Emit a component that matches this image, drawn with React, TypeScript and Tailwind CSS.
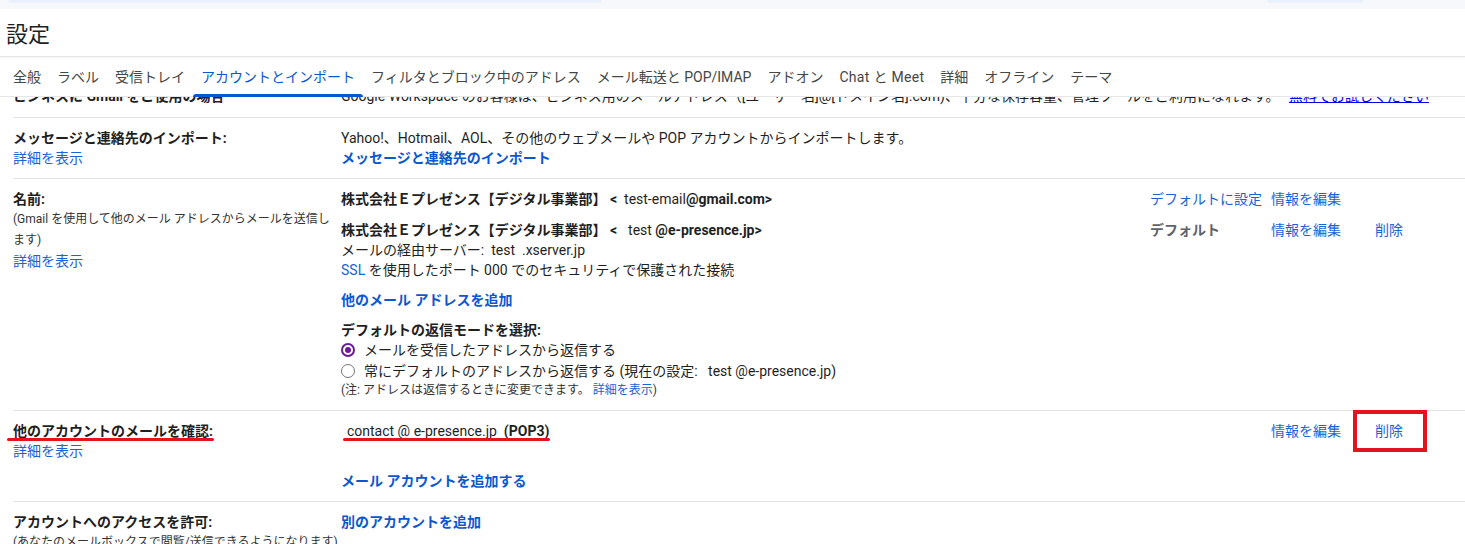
import React from 'react';

const tabs = [
  '全般',
  'ラベル',
  '受信トレイ',
  'アカウントとインポート',
  'フィルタとブロック中のアドレス',
  'メール転送と POP/IMAP',
  'アドオン',
  'Chat と Meet',
  '詳細',
  'オフライン',
  'テーマ',
];

const ACTIVE_TAB = 'アカウントとインポート';

function Link({ children, bold }: { children: React.ReactNode; bold?: boolean }) {
  return (
    <span className={bold ? 'font-bold text-[#0b57d0]' : 'text-[#1a62d6]'}>{children}</span>
  );
}

function Radio({ checked }: { checked?: boolean }) {
  return (
    <span
      className={
        checked
          ? 'mr-[9px] flex h-[14px] w-[14px] shrink-0 items-center justify-center rounded-full border-2 border-[#6b1b9a]'
          : 'mr-[9px] flex h-[14px] w-[14px] shrink-0 items-center justify-center rounded-full border border-[#767676]'
      }
    >
      {checked && <span className="h-[6px] w-[6px] rounded-full bg-[#6b1b9a]" />}
    </span>
  );
}

function Row({
  left,
  right,
  className,
}: {
  left: React.ReactNode;
  right: React.ReactNode;
  className?: string;
}) {
  return (
    <div className={`ml-[13px] flex border-b border-[#e3e3e3] ${className ?? 'pt-[10px] pb-[10px]'}`}>
      <div className="w-[328px] shrink-0">{left}</div>
      <div className="min-w-0 flex-1">{right}</div>
    </div>
  );
}

function Actions({
  first,
  second,
  third,
}: {
  first?: React.ReactNode;
  second?: React.ReactNode;
  third?: React.ReactNode;
}) {
  return (
    <div className="flex w-[315px] shrink-0">
      <div className="w-[121px]">{first}</div>
      <div className="w-[104px]">{second}</div>
      <div className="flex-1">{third}</div>
    </div>
  );
}

export default function App() {
  return (
    <div className="h-[544px] w-[1465px] overflow-hidden bg-white font-['Roboto','Noto_Sans_CJK_JP',sans-serif] text-[14px] leading-[20px] text-[#1f1f1f]">
      {/* top strip */}
      <div className="flex h-[9px] items-start bg-[#f6f8fc]">
        <div className="ml-[8px] h-[3px] w-[594px] rounded-b-[6px] bg-[#eaf1fb]" />
        <div className="ml-auto mr-[102px] h-[3px] w-[96px] rounded-b-[6px] bg-[#eaf1fb]" />
      </div>

      {/* header */}
      <div className="relative z-10 bg-white">
        <div className="flex h-[48px] items-center border-b border-[#e6e6e6] pt-[5px] pl-[6px] shadow-[0_1px_1px_rgba(0,0,0,0.04)]">
          <h1 className="text-[22px] leading-[28px] font-normal text-[#1f1f1f]">設定</h1>
        </div>
        <div className="flex h-[40px] items-stretch border-b border-[#e6e6e6] pl-[5px]">
          {tabs.map((tab) => (
            <div
              key={tab}
              className={
                tab === ACTIVE_TAB
                  ? 'relative flex items-center px-[8px] text-[#0b57d0]'
                  : tab === 'Chat と Meet'
                    ? 'relative flex items-center px-[8px] tracking-[0.3px] text-[#444746]'
                    : 'relative flex items-center px-[8px] text-[#444746]'
              }
            >
              {tab}
              {tab === ACTIVE_TAB && (
                <span className="absolute right-0 -bottom-px left-0 h-[3px] rounded-t-[3px] bg-[#0b57d0]" />
              )}
            </div>
          ))}
        </div>
      </div>

      {/* content */}
      <div className="relative">
        <Row
          className="-mt-[11px] pb-[11px]"
          left={<div className="font-bold">ビジネスに Gmail をご使用の場合</div>}
          right={
            <div className="whitespace-nowrap">
              Google Workspace のお客様は、ビジネス用のメールアドレス（[ユーザー名]@[ドメイン名].com)、十分な保存容量、管理ツールをご利用になれます。{' '}
              <span className="ml-[6px] text-[#0000ee] underline">無料でお試しください</span>
            </div>
          }
        />

        <Row
          left={
            <>
              <div className="font-bold">メッセージと連絡先のインポート:</div>
              <Link>詳細を表示</Link>
            </>
          }
          right={
            <>
              <div>Yahoo!、Hotmail、AOL、その他のウェブメールや POP アカウントからインポートします。</div>
              <Link bold>メッセージと連絡先のインポート</Link>
            </>
          }
        />

        <Row
          left={
            <>
              <div className="font-bold">名前:</div>
              <div className="pr-[2px] text-[12px] leading-[21px] text-[#333]">
                (Gmail を使用して他のメール アドレスからメールを送信します)
              </div>
              <Link>詳細を表示</Link>
            </>
          }
          right={
            <>
              <div className="flex">
                <div className="flex-1 whitespace-nowrap">
                  <span className="font-bold">株式会社Ｅプレゼンス【デジタル事業部】 &lt;</span>
                  <span className="ml-[7px]">test-email</span>
                  <span className="font-bold">@gmail.com&gt;</span>
                </div>
                <Actions first={<Link>デフォルトに設定</Link>} second={<Link>情報を編集</Link>} />
              </div>
              <div className="mt-[11px] flex">
                <div className="flex-1">
                  <div className="whitespace-nowrap">
                    <span className="font-bold">株式会社Ｅプレゼンス【デジタル事業部】 &lt;</span>
                    <span className="ml-[11px]">test</span>
                    <span className="font-bold"> @e-presence.jp&gt;</span>
                  </div>
                  <div>メールの経由サーバー:&nbsp; test&nbsp; .xserver.jp</div>
                  <div>
                    <Link>SSL</Link> を使用したポート 000 でのセキュリティで保護された接続
                  </div>
                </div>
                <Actions
                  first={<span className="font-bold text-[#5f6368]">デフォルト</span>}
                  second={<Link>情報を編集</Link>}
                  third={<Link>削除</Link>}
                />
              </div>
              <div className="mt-[10px]">
                <Link bold>他のメール アドレスを追加</Link>
              </div>
              <div className="mt-[10px] font-bold">デフォルトの返信モードを選択:</div>
              <div className="flex items-center">
                <Radio checked />
                メールを受信したアドレスから返信する
              </div>
              <div className="mt-[1px] flex items-center">
                <Radio />
                常にデフォルトのアドレスから返信する (現在の設定:&nbsp;&nbsp; test @e-presence.jp)
              </div>
              <div className="text-[12px] leading-[19px] text-[#333]">
                (注: アドレスは返信するときに変更できます。 <Link>詳細を表示</Link>)
              </div>
            </>
          }
        />

        <Row
          left={
            <>
              <div className="relative inline-block font-bold">
                他のアカウントのメールを確認:
                <span className="absolute top-[17px] -left-[6px] h-[3px] w-[207px] rounded-full bg-[#e3141c]" />
              </div>
              <div>
                <Link>詳細を表示</Link>
              </div>
            </>
          }
          right={
            <>
              <div className="flex">
                <div className="flex-1">
                  <span className="relative ml-[6px] inline-block whitespace-nowrap">
                    contact @ e-presence.jp&nbsp; <span className="font-bold">(POP3)</span>
                    <span className="absolute top-[17px] -left-[4px] h-[3px] w-[207px] rounded-full bg-[#e3141c]" />
                  </span>
                </div>
                <Actions
                  second={<Link>情報を編集</Link>}
                  third={
                    <span className="relative inline-block">
                      <Link>削除</Link>
                      <span className="absolute -top-[11px] -left-[22px] h-[42px] w-[74px] border-[4px] border-[#e3141c]" />
                    </span>
                  }
                />
              </div>
              <div className="mt-[30px]">
                <Link bold>メール アカウントを追加する</Link>
              </div>
            </>
          }
        />

        <Row
          className="pt-[10px] pb-[10px] border-b-0"
          left={
            <>
              <div className="font-bold">アカウントへのアクセスを許可:</div>
              <div className="text-[12px] leading-[20px] text-[#333]">
                (あなたのメールボックスで閲覧/送信できるようになります)
              </div>
            </>
          }
          right={<Link bold>別のアカウントを追加</Link>}
        />
      </div>
    </div>
  );
}
